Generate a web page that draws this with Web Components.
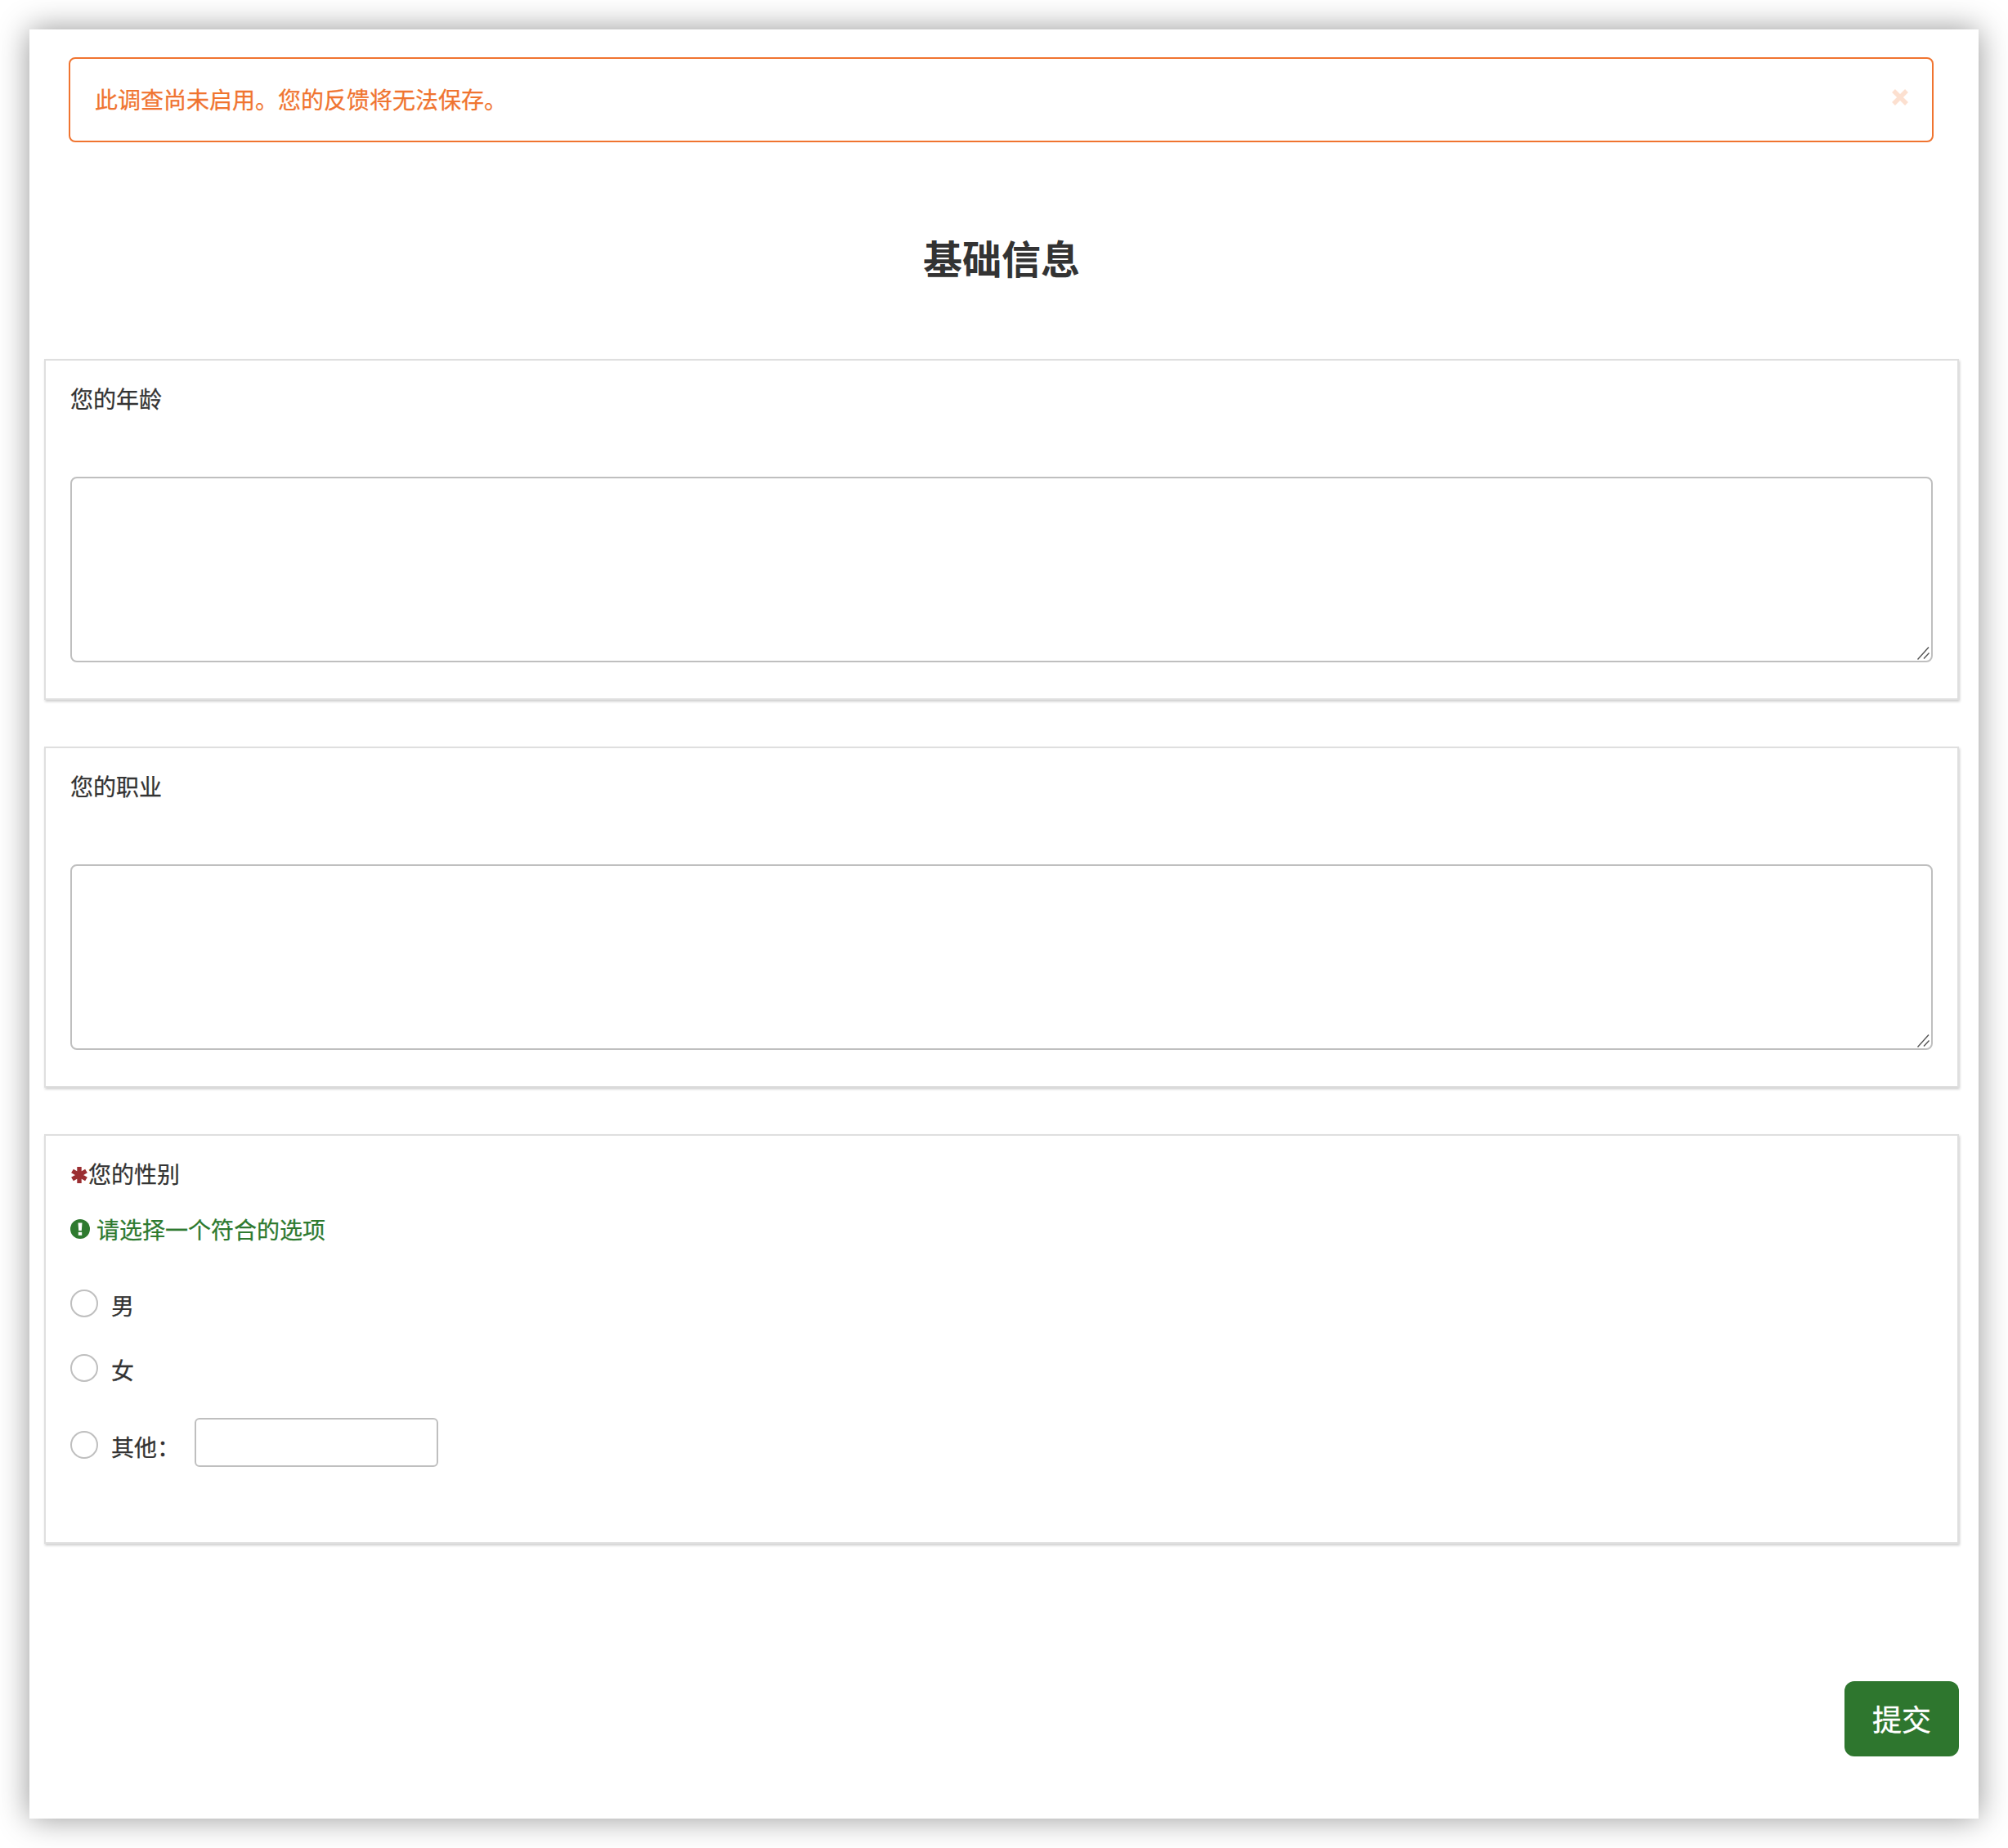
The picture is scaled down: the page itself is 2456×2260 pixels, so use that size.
<!DOCTYPE html>
<html lang="zh-CN">
<head>
<meta charset="utf-8">
<title>基础信息</title>
<style>
  html, body { margin: 0; padding: 0; background: #fff; }
  body { font-family: "Noto Sans CJK SC", "Liberation Sans", sans-serif; font-size: 28px; color: #333; -webkit-text-stroke: .25px currentColor; }
</style>
</head>
<body>
<survey-page>
  <survey-alert>此调查尚未启用。您的反馈将无法保存。</survey-alert>
  <survey-title>基础信息</survey-title>
  <survey-question label="您的年龄"><survey-textarea></survey-textarea></survey-question>
  <survey-question label="您的职业"><survey-textarea></survey-textarea></survey-question>
  <survey-question class="choice" label="您的性别" required hint="请选择一个符合的选项">
    <survey-radio>男</survey-radio>
    <survey-radio>女</survey-radio>
    <survey-radio other>其他：</survey-radio>
  </survey-question>
  <survey-submit>提交</survey-submit>
</survey-page>

<script>
/** Outer white sheet with the soft shadow */
class SurveyPage extends HTMLElement {
  constructor() {
    super();
    this.attachShadow({ mode: 'open' }).innerHTML = `
      <style>
        :host { display: block; padding: 36px; height: 2260px; box-sizing: border-box; }
        .sheet {
          height: 2188px;
          box-sizing: border-box;
          padding: 34px 24px 0 18px;
          background: #fff;
          box-shadow: 0 0 36px rgba(0, 0, 0, .42);
          display: flex;
          flex-direction: column;
        }
      </style>
      <div class="sheet"><slot></slot></div>
    `;
  }
}

/** Orange notice with a dismiss cross */
class SurveyAlert extends HTMLElement {
  constructor() {
    super();
    this.attachShadow({ mode: 'open' }).innerHTML = `
      <style>
        :host {
          display: flex;
          align-items: center;
          justify-content: space-between;
          height: 104px;
          box-sizing: border-box;
          margin: 0 31px 0 30px;
          padding: 0 29px 3px 30px;
          border: 2px solid #f07430;
          border-radius: 8px;
          color: #f07430;
          font-size: 28px;
        }
        svg { display: block; width: 20px; height: 20px; margin: -3px 0 0; }
      </style>
      <span><slot></slot></span>
      <svg viewBox="0 0 20 20"><path d="M2 2 18 18M18 2 2 18" stroke="#fce0d0" stroke-width="5.5" fill="none"/></svg>
    `;
  }
}

class SurveyTitle extends HTMLElement {
  constructor() {
    super();
    this.attachShadow({ mode: 'open' }).innerHTML = `
      <style>
        :host {
          display: block;
          height: 265px;
          line-height: 280px;
          text-align: center;
          font-size: 48px;
          font-weight: 700;
          color: #333;
          -webkit-text-stroke: 0;
        }
      </style>
      <slot></slot>
    `;
  }
}

/** One question card: label, optional hint, and the answer control */
class SurveyQuestion extends HTMLElement {
  constructor() {
    super();
    const required = this.hasAttribute('required');
    const hint = this.getAttribute('hint');
    this.attachShadow({ mode: 'open' }).innerHTML = `
      <style>
        :host {
          display: block;
          box-sizing: border-box;
          margin-bottom: 57px;
          padding: 26px 30px 44px 30px;
          border: 2px solid #dfdfdf;
          box-shadow: 1px 2px 3px rgba(0, 0, 0, .2);
          background: #fff;
        }
        :host(.choice) { margin-bottom: 0; padding-bottom: 92px; }
        .label { display: flex; align-items: center; height: 40px; line-height: 40px; color: #333; font-size: 28px; }
        .star { display: block; width: 22px; height: 22px; margin-top: 4px; }
        .hint { display: flex; align-items: center; gap: 8px; height: 40px; margin-top: 28px; color: #2e7a2f; font-size: 28px; line-height: 40px; }
        .hint svg { display: block; width: 24px; height: 24px; }
        .body { margin-top: 76px; }
        .has-hint .body { margin-top: 43px; }
      </style>
      <div class="${hint ? 'has-hint' : ''}">
        <div class="label">
          ${required ? `<svg class="star" viewBox="0 0 22 22"><path d="M11 1V21M2.5 6 19.5 16M19.5 6 2.5 16" stroke="#9b2e31" stroke-width="5.4" fill="none"/></svg>` : ''}
          <span>${this.getAttribute('label')}</span>
        </div>
        ${hint ? `<div class="hint">
          <svg viewBox="0 0 24 24"><circle cx="12" cy="12" r="12" fill="#2e7a2f"/><path d="M9.5 4.5h5l-.7 9.5h-3.6zM9.8 15.8h4.4v4h-4.4z" fill="#fff"/></svg>
          <span>${hint}</span>
        </div>` : ''}
        <div class="body"><slot></slot></div>
      </div>
    `;
  }
}

/** Textarea with a drawn resize grip, the native one is smaller at this scale */
class SurveyTextarea extends HTMLElement {
  constructor() {
    super();
    this.attachShadow({ mode: 'open' }).innerHTML = `
      <style>
        :host { display: block; position: relative; height: 227px; }
        textarea {
          display: block;
          width: 100%;
          height: 100%;
          box-sizing: border-box;
          margin: 0;
          border: 2px solid #bfbfbf;
          border-radius: 8px;
          background: #fff;
          resize: none;
          outline: none;
        }
        svg { position: absolute; right: 2px; bottom: 2px; width: 18px; height: 20px; }
      </style>
      <textarea></textarea>
      <svg viewBox="0 0 18 20"><path d="M1.5 18.5 15 3.5M9 17.5 15.5 10.5" stroke="#555" stroke-width="1.4" fill="none"/></svg>
    `;
  }
}

/** Radio row; the "other" variant adds a free text input */
class SurveyRadio extends HTMLElement {
  constructor() {
    super();
    const other = this.hasAttribute('other');
    this.attachShadow({ mode: 'open' }).innerHTML = `
      <style>
        :host { display: flex; align-items: center; height: 60px; margin-bottom: 19px; color: #333; font-size: 28px; }
        :host([other]) { margin-top: 29px; margin-bottom: 0; }
        .dot { width: 34px; height: 34px; box-sizing: border-box; border: 2px solid #bfbfbf; border-radius: 50%; background: #fff; margin: -4px 16px 0 0; }
        :host([other]) .dot { margin-top: 6px; }
        .text { line-height: 40px; }
        :host([other]) .text { margin-top: 10px; }
        input { width: 298px; height: 60px; box-sizing: border-box; margin: 0 0 0 18px; border: 2px solid #bfbfbf; border-radius: 6px; outline: none; background: #fff; }
      </style>
      <span class="dot"></span>
      <span class="text"><slot></slot></span>
      ${other ? '<input type="text">' : ''}
    `;
  }
}

class SurveySubmit extends HTMLElement {
  constructor() {
    super();
    this.attachShadow({ mode: 'open' }).innerHTML = `
      <style>
        :host { display: flex; justify-content: flex-end; margin-top: 168px; }
        button {
          width: 140px;
          height: 92px;
          padding: 0 0 2px;
          border: 0;
          border-radius: 12px;
          background: #2e762e;
          color: #fff;
          font: 36px "Noto Sans CJK SC", "Liberation Sans", sans-serif;
          -webkit-text-stroke: .3px #fff;
        }
      </style>
      <button type="button"><slot></slot></button>
    `;
  }
}

customElements.define('survey-page', SurveyPage);
customElements.define('survey-alert', SurveyAlert);
customElements.define('survey-title', SurveyTitle);
customElements.define('survey-question', SurveyQuestion);
customElements.define('survey-textarea', SurveyTextarea);
customElements.define('survey-radio', SurveyRadio);
customElements.define('survey-submit', SurveySubmit);
</script>
</body>
</html>
